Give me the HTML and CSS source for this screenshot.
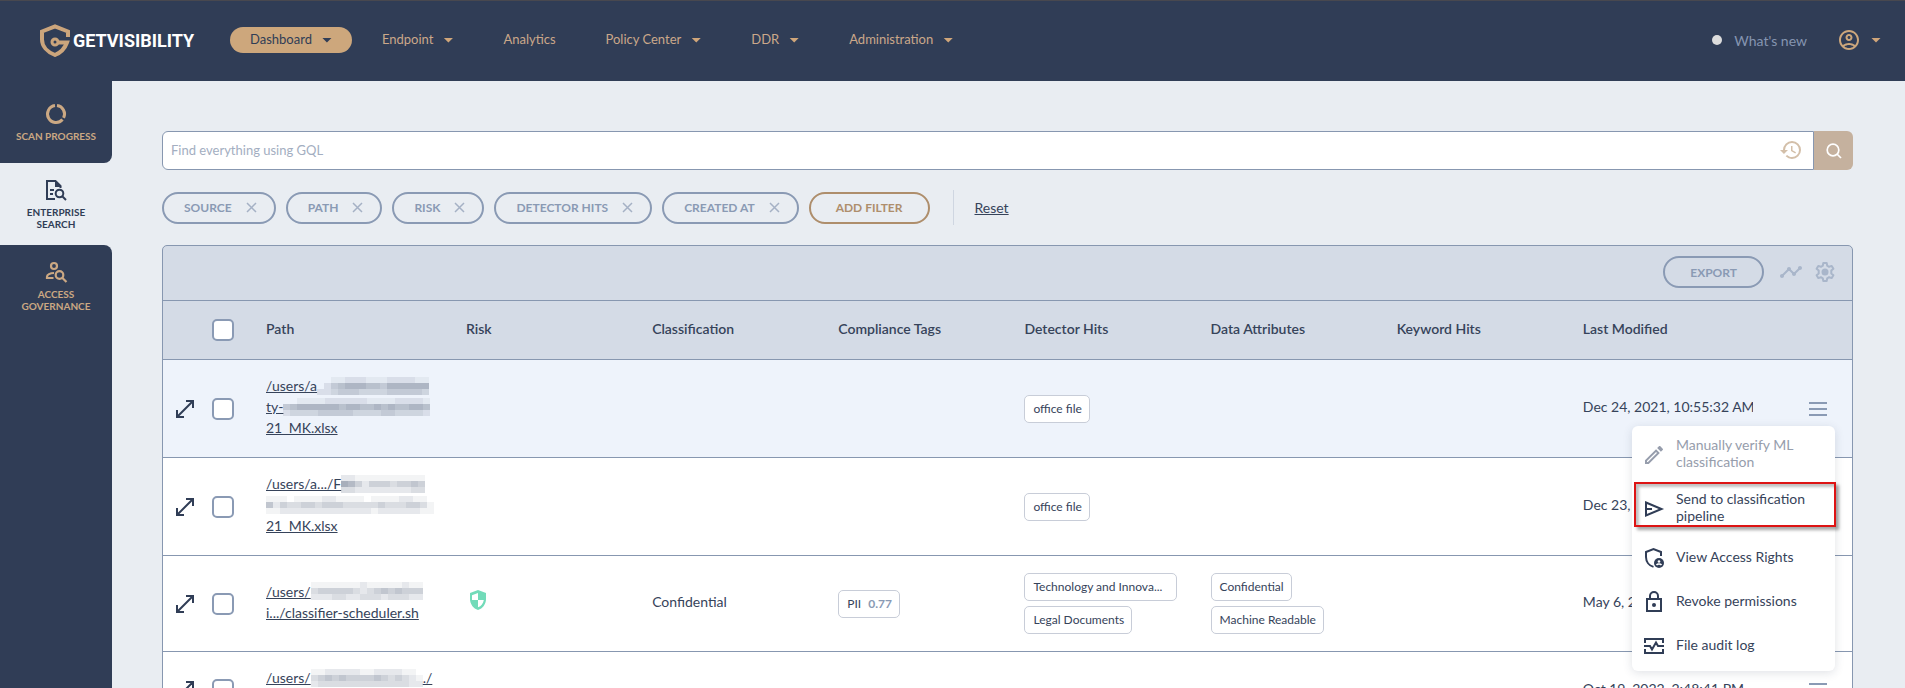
FILE: index.html
```
<!DOCTYPE html>
<html lang="en">
<head>
  <meta charset="UTF-8">
  <meta name="viewport" content="width=device-width, initial-scale=1.0">
  <title>Getvisibility - Enterprise Search</title>
  <link rel="stylesheet" href="styles.css">
</head>
<body>
  <header class="topbar">
    <a class="logo" href="#">
      <svg width="30" height="33" viewBox="0 0 30 33" fill="none" stroke="#cba57c" stroke-width="4">
        <path d="M28 13V7.500L15 2.500 2 7.500v8C2 22 7 28 15 31c6-2.500 10-7 12-12.500H17"/>
        <circle cx="15" cy="18" r="3" stroke-width="3"/>
      </svg>
      <span>GETVISIBILITY</span>
    </a>
    <nav class="nav">
      <a class="active" href="#">Dashboard <i class="caret"></i></a>
      <a href="#">Endpoint <i class="caret"></i></a>
      <a href="#">Analytics</a>
      <a href="#">Policy Center <i class="caret"></i></a>
      <a href="#">DDR <i class="caret"></i></a>
      <a href="#">Administration <i class="caret"></i></a>
    </nav>
    <div class="account">
      <a class="whats-new" href="#"><i class="dot"></i>What's new</a>
      <button class="user" aria-label="Account">
        <svg width="24" height="24" viewBox="0 0 24 24" fill="currentColor"><path d="M12 2C6.480 2 2 6.480 2 12s4.480 10 10 10 10-4.480 10-10S17.520 2 12 2zM7.350 18.500C8.660 17.560 10.260 17 12 17s3.340.560 4.650 1.500C15.340 19.440 13.740 20 12 20s-3.340-.560-4.650-1.500zm10.790-1.380C16.450 15.800 14.320 15 12 15s-4.450.800-6.140 2.120C4.700 15.730 4 13.950 4 12c0-4.420 3.580-8 8-8s8 3.580 8 8c0 1.950-.700 3.730-1.860 5.120zM12 6c-1.930 0-3.500 1.570-3.500 3.500S10.070 13 12 13s3.500-1.570 3.500-3.500S13.930 6 12 6zm0 5c-.830 0-1.500-.670-1.500-1.500S11.170 8 12 8s1.500.670 1.500 1.500S12.830 11 12 11z"/></svg>
        <i class="caret"></i>
      </button>
    </div>
  </header>

  <div class="layout">
    <aside class="sidebar">
      <a class="before-active" href="#">
        <svg width="24" height="24" viewBox="0 0 24 24" fill="none" stroke="currentColor" stroke-width="3"><path d="M13 3.550A8.500 8.500 0 0 1 19.600 15.800M18.500 17.500A8.500 8.500 0 1 1 11 3.550"/></svg>
        SCAN PROGRESS
      </a>
      <a class="active" href="#">
        <svg width="24" height="24" viewBox="0 0 24 24" fill="none" stroke="currentColor" stroke-width="2"><path d="M11 21H3V3h8.500l5 5v2"/><path d="M11 2.500 17.500 9H11z" fill="currentColor" stroke="none"/><path d="M6 12h4M6 16h3"/><circle cx="15.500" cy="15.500" r="3.800"/><path d="m18 18 4 4"/></svg>
        ENTERPRISE SEARCH
      </a>
      <a class="after-active" href="#">
        <svg width="24" height="24" viewBox="0 0 24 24" fill="none" stroke="currentColor" stroke-width="2.200"><circle cx="10" cy="6" r="3"/><path d="M10 13c-4 0-7 1.800-7 3.700V18h6.500"/><circle cx="15.500" cy="15" r="3.800"/><path d="m18 17.500 4.500 4.500"/></svg>
        ACCESS GOVERNANCE
      </a>
    </aside>

    <main class="content">
      <form class="search">
        <div class="search-box">
          <input type="text" placeholder="Find everything using GQL" aria-label="Search">
          <button type="button" class="history" aria-label="History">
            <svg width="24" height="24" viewBox="0 0 24 24" fill="currentColor"><path d="M13.500 8H12v5l4.280 2.540.720-1.210-3.500-2.080V8M13 3a9 9 0 0 0-9 9H1l3.960 4.030L9 12H6a7 7 0 0 1 7-7 7 7 0 0 1 7 7 7 7 0 0 1-7 7c-1.930 0-3.680-.790-4.940-2.060l-1.420 1.420A8.896 8.896 0 0 0 13 21a9 9 0 0 0 9-9 9 9 0 0 0-9-9"/></svg>
          </button>
        </div>
        <button type="button" class="search-btn" aria-label="Search">
          <svg width="16" height="16" viewBox="0 0 16 16" fill="none" stroke="#fff" stroke-width="1.700"><circle cx="7" cy="7" r="5.800"/><path d="m11 11 4 4"/></svg>
        </button>
      </form>

      <div class="filters">
        <button class="pill">SOURCE <svg width="11" height="11" viewBox="0 0 11 11"><path d="m1 1 9 9M10 1l-9 9"/></svg></button>
        <button class="pill">PATH <svg width="11" height="11" viewBox="0 0 11 11"><path d="m1 1 9 9M10 1l-9 9"/></svg></button>
        <button class="pill">RISK <svg width="11" height="11" viewBox="0 0 11 11"><path d="m1 1 9 9M10 1l-9 9"/></svg></button>
        <button class="pill">DETECTOR HITS <svg width="11" height="11" viewBox="0 0 11 11"><path d="m1 1 9 9M10 1l-9 9"/></svg></button>
        <button class="pill">CREATED AT <svg width="11" height="11" viewBox="0 0 11 11"><path d="m1 1 9 9M10 1l-9 9"/></svg></button>
        <button class="pill add">ADD FILTER</button>
        <span class="divider"></span>
        <a class="reset" href="#">Reset</a>
      </div>

      <section class="panel">
        <div class="toolbar">
          <button class="pill export">EXPORT</button>
          <button class="icon-btn" aria-label="Chart">
            <svg width="24" height="24" viewBox="0 0 24 24" fill="currentColor"><path d="M23 8c0 1.100-.900 2-2 2-.180 0-.350-.020-.510-.070l-3.560 3.550c.050.160.070.340.070.520 0 1.100-.900 2-2 2s-2-.900-2-2c0-.180.020-.360.070-.520l-2.550-2.550c-.160.050-.340.070-.520.070s-.360-.020-.520-.070l-4.550 4.560c.050.160.070.330.070.510 0 1.100-.900 2-2 2s-2-.900-2-2 .900-2 2-2c.180 0 .350.020.510.070l4.560-4.550C8.020 9.360 8 9.180 8 9c0-1.100.900-2 2-2s2 .900 2 2c0 .180-.020.360-.070.520l2.550 2.550c.160-.050.340-.070.520-.070s.360.020.520.070l3.550-3.560C19.020 8.350 19 8.180 19 8c0-1.100.900-2 2-2s2 .900 2 2z"/></svg>
          </button>
          <button class="icon-btn" aria-label="Settings">
            <svg width="24" height="24" viewBox="0 0 24 24"><path fill="none" stroke="currentColor" stroke-width="2" stroke-linejoin="round" d="M10.300 3h3.400l.5 2.700 1.900 1.100 2.600-.9 1.700 2.900-2.100 1.800v2.800l2.100 1.800-1.700 2.900-2.600-.9-1.900 1.100-.5 2.700h-3.400l-.5-2.700-1.900-1.100-2.600.9-1.700-2.900 2.100-1.800v-2.800L3.600 8.800l1.700-2.900 2.600.9 1.900-1.100z"/><circle cx="12" cy="12" r="3.500" fill="currentColor"/></svg>
          </button>
        </div>

        <table>
          <colgroup>
            <col class="col-expand"><col class="col-check"><col class="col-path">
            <col><col><col><col><col><col><col>
            <col class="col-actions">
          </colgroup>
          <thead>
            <tr>
              <th></th>
              <th class="check"><input type="checkbox" aria-label="Select all"></th>
              <th>Path</th>
              <th>Risk</th>
              <th>Classification</th>
              <th>Compliance Tags</th>
              <th>Detector Hits</th>
              <th>Data Attributes</th>
              <th>Keyword Hits</th>
              <th>Last Modified</th>
              <th></th>
            </tr>
          </thead>
          <tbody>
            <tr class="selected">
              <td class="expand"><button aria-label="Expand"><svg width="20" height="20" viewBox="0 0 20 20"><path d="M11 2h7v7M2 11v7h7M18 2 2 18"/></svg></button></td>
              <td class="check"><input type="checkbox" aria-label="Select row"></td>
              <td>
                <a class="path" href="#">
                  <span class="line">/users/a<span class="mosaic" data-shades="0011222111222211/0245666554666666/2234443333444443"></span></span>
                  <span class="line">ty-<span class="mosaic" data-shades="001111222222111122221/456666665665565655665/233334444433334433332"></span></span>
                  <span class="line">21_MK.xlsx</span>
                </a>
              </td>
              <td></td>
              <td></td>
              <td></td>
              <td class="tags"><span class="chip">office file</span></td>
              <td></td>
              <td></td>
              <td class="date">Dec 24, 2021, 10:55:32 AM</td>
              <td class="actions">
                <button class="burger" aria-label="Row actions"><i></i><i></i><i></i></button>
                <div class="menu">
                  <button class="tall" disabled>
                    <svg width="24" height="24" viewBox="0 0 24 24" fill="currentColor"><path d="m14.060 9.020.920.920L5.920 19H5v-.920l9.060-9.060M17.660 3c-.250 0-.510.100-.700.290l-1.830 1.830 3.750 3.750 1.830-1.830a.996.996 0 0 0 0-1.410l-2.340-2.340c-.200-.200-.450-.290-.710-.290zm-3.600 3.190L3 17.250V21h3.750L17.810 9.940l-3.750-3.750z"/></svg>
                    Manually verify ML classification
                  </button>
                  <button class="tall">
                    <svg width="24" height="24" viewBox="0 0 24 24" fill="none" stroke="currentColor" stroke-width="2"><path d="M4 5.500 19.500 12 4 18.500zM4 12h6"/></svg>
                    Send to classification pipeline
                  </button>
                  <button>
                    <svg width="24" height="24" viewBox="0 0 24 24" fill="none" stroke="currentColor" stroke-width="2"><path d="M19 10V6l-7.500-3L4 6v5c0 4.500 3 8.600 7.500 9.900"/><circle cx="17" cy="17" r="5" fill="currentColor" stroke="none"/><circle cx="17" cy="15.500" r="1.300" fill="#fff" stroke="none"/><path d="M14.500 19c1-1.300 4-1.300 5 0" stroke="#fff" stroke-width="1.500"/></svg>
                    View Access Rights
                  </button>
                  <button>
                    <svg width="24" height="24" viewBox="0 0 24 24" fill="none" stroke="currentColor" stroke-width="2"><path d="M5 9h14v12H5zM8 9V6a4 4 0 0 1 8 0v3"/><circle cx="12" cy="15" r="2" fill="currentColor" stroke="none"/></svg>
                    Revoke permissions
                  </button>
                  <button>
                    <svg width="24" height="24" viewBox="0 0 24 24" fill="none" stroke="currentColor" stroke-width="2"><path d="M3 9V5h18v4M3 15v4h18v-4M2 12h6l2 3.500L14 8.500l2 3.500h6"/></svg>
                    File audit log
                  </button>
                  <div class="highlight"></div>
                </div>
              </td>
            </tr>
            <tr>
              <td class="expand"><button aria-label="Expand"><svg width="20" height="20" viewBox="0 0 20 20"><path d="M11 2h7v7M2 11v7h7M18 2 2 18"/></svg></button></td>
              <td class="check"><input type="checkbox" aria-label="Select row"></td>
              <td>
                <a class="path" href="#">
                  <span class="line">/users/a.../F<span class="mosaic" data-shades="221111111111/764244434454/332222222233"></span></span>
                  <span class="line"><span class="mosaic" data-shades="111011112211110111122110/524334434443333343334431/112222222222222122222211"></span></span>
                  <span class="line">21_MK.xlsx</span>
                </a>
              </td>
              <td></td>
              <td></td>
              <td></td>
              <td class="tags"><span class="chip">office file</span></td>
              <td></td>
              <td></td>
              <td class="date">Dec 23, 2021</td>
              <td class="actions"><button class="burger" aria-label="Row actions"><i></i><i></i><i></i></button></td>
            </tr>
            <tr class="short">
              <td class="expand"><button aria-label="Expand"><svg width="20" height="20" viewBox="0 0 20 20"><path d="M11 2h7v7M2 11v7h7M18 2 2 18"/></svg></button></td>
              <td class="check"><input type="checkbox" aria-label="Select row"></td>
              <td>
                <a class="path" href="#">
                  <span class="line">/users/<span class="mosaic" data-shades="1111111211111211/3444443234545444/2223322333233322"></span></span>
                  <span class="line">i.../classifier-scheduler.sh</span>
                </a>
              </td>
              <td class="risk">
                <svg class="shield" width="24" height="24" viewBox="0 0 24 24"><path fill="#72dbb9" d="M12 2 4 5v6c0 5 3.400 9.700 8 11 4.600-1.300 8-6 8-11V5z"/><path fill="#fff" d="M12 5v7h5.800c-.400 3.200-2.600 6.200-5.800 7.300V12H6V7.200z"/></svg>
              </td>
              <td>Confidential</td>
              <td class="tags"><span class="chip">PII <b>0.77</b></span></td>
              <td class="tags"><div class="chips"><span class="chip wide">Technology and Innova...</span><span class="chip">Legal Documents</span></div></td>
              <td class="tags"><div class="chips"><span class="chip">Confidential</span><span class="chip">Machine Readable</span></div></td>
              <td></td>
              <td class="date">May 6, 2022</td>
              <td class="actions"><button class="burger" aria-label="Row actions"><i></i><i></i><i></i></button></td>
            </tr>
            <tr class="compact">
              <td class="expand"><button aria-label="Expand"><svg width="20" height="20" viewBox="0 0 20 20"><path d="M11 2h7v7M2 11v7h7M18 2 2 18"/></svg></button></td>
              <td class="check"><input type="checkbox" aria-label="Select row"></td>
              <td>
                <a class="path" href="#">
                  <span class="line">/users/<span class="mosaic" data-shades="1122222112222110/3454544445434321/2333333333333322"></span>./</span>
                  <span class="line">scheduler.sh</span>
                </a>
              </td>
              <td></td>
              <td></td>
              <td></td>
              <td></td>
              <td></td>
              <td></td>
              <td class="date">Oct 19, 2022, 2:48:41 PM</td>
              <td class="actions"><button class="burger" aria-label="Row actions"><i></i><i></i><i></i></button></td>
            </tr>
          </tbody>
        </table>
      </section>
    </main>
  </div>

  <script src="script.js"></script>
</body>
</html>
```

FILE: styles.css
```
* {
  box-sizing: border-box;
}

body {
  margin: 0;
  height: 100vh;
  overflow: hidden;
  display: flex;
  flex-direction: column;
  background-color: #e9edf2;
  color: #36435a;
  font-family: Lato, "Liberation Sans", sans-serif;
  font-size: 14px;
}

a {
  color: inherit;
  text-decoration: none;
}

button {
  padding: 0;
  border: none;
  background: none;
  color: inherit;
  font: inherit;
  cursor: pointer;
}

svg {
  flex-shrink: 0;
}

/* top bar */

.topbar {
  flex-shrink: 0;
  display: flex;
  align-items: center;
  height: 81px;
  padding: 0 24px 2px 40px;
  border-top: 1px solid #48484f;
  background-color: #303d56;
}

.logo {
  display: flex;
  align-items: center;
  gap: 3px;
  width: 190px;
  color: #fff;
  font-family: Roboto, "Liberation Sans", sans-serif;
  font-size: 18px;
  font-weight: bold;
}

.nav {
  display: flex;
  gap: 10px;
  color: #cba88a;
  font-size: 13px;
}

.nav a {
  display: flex;
  align-items: center;
  gap: 10px;
  height: 26px;
  padding: 0 20px 2px;
  border-radius: 13px;
}

.nav .active {
  background-color: #cda77c;
  color: #303d56;
}

.caret {
  width: 10px;
  height: 5px;
  background-color: #d0a67a;
  clip-path: polygon(0 0, 100% 0, 50% 100%);
}

.nav .caret {
  margin-top: 2px;
}

.active .caret {
  background-color: #303d56;
}

.account {
  display: flex;
  align-items: center;
  gap: 30px;
  margin-left: auto;
}

.whats-new {
  display: flex;
  align-items: center;
  gap: 12px;
  color: #8595b1;
}

.dot {
  width: 10px;
  height: 10px;
  border-radius: 50%;
  background-color: #dcdcdc;
}

.user {
  display: flex;
  align-items: center;
  gap: 10px;
  color: #cda77c;
}

/* sidebar */

.layout {
  flex: 1;
  display: flex;
  min-height: 0;
}

.sidebar {
  display: flex;
  flex-direction: column;
  width: 112px;
  flex-shrink: 0;
}

.sidebar a {
  display: flex;
  flex-direction: column;
  align-items: center;
  gap: 4px;
  height: 82px;
  padding: 15px 16px 0;
  background-color: #303d56;
  color: #cba883;
  font-size: 10px;
  font-weight: bold;
  line-height: 12px;
  text-align: center;
}

.sidebar .before-active {
  padding: 21px 0 0;
  border-bottom-right-radius: 8px;
}

.sidebar .active {
  background-color: transparent;
  color: #303d56;
}

.sidebar .after-active {
  flex: 1;
  border-top-right-radius: 8px;
}

/* search and filters */

.content {
  flex: 1;
  min-width: 0;
  padding: 50px 52px 0 50px;
}

.search {
  display: flex;
  height: 39px;
}

.search-box {
  flex: 1;
  display: flex;
  align-items: center;
  padding-right: 10px;
  border: 1px solid #8797b0;
  border-radius: 6px 0 0 6px;
  background-color: #fff;
}

.search-box input {
  flex: 1;
  height: 100%;
  padding: 0 8px 2px;
  border: none;
  outline: none;
  background: none;
  font: inherit;
  font-size: 13px;
}

.search-box input::placeholder {
  color: #a3aec1;
}

.history {
  height: 24px;
  margin-bottom: 2px;
  color: #d3bfa9;
}

.search-btn {
  display: flex;
  align-items: center;
  justify-content: center;
  width: 39px;
  border-radius: 0 6px 6px 0;
  background-color: #c5b19e;
}

.filters {
  display: flex;
  align-items: center;
  gap: 10px;
  margin: 20px 0;
}

.pill {
  display: flex;
  align-items: center;
  justify-content: center;
  gap: 14px;
  height: 32px;
  padding: 0 17px 0 20px;
  border: 2px solid #8a9ab4;
  border-radius: 16px;
  color: #8a9ab4;
  font-size: 12px;
  font-weight: bold;
}

.pill svg {
  fill: none;
  stroke: #a5b1c5;
  stroke-width: 1.5;
}

.add {
  padding: 0 25px;
  border-color: #ae8e6c;
  color: #ae8e6c;
}

.divider {
  width: 1px;
  height: 35px;
  margin: 0 11px 0 13px;
  background-color: #cfd6e1;
}

.reset {
  text-decoration: underline;
}

/* results table */

.panel {
  border: 1px solid #8797b0;
  border-radius: 5px 5px 0 0;
  background-color: #d4dbe6;
}

.toolbar {
  display: flex;
  align-items: center;
  justify-content: flex-end;
  gap: 10px;
  height: 54px;
  padding: 0 15px 2px 0;
}

.export {
  padding: 0 25px;
  margin-right: 5px;
}

.icon-btn {
  height: 24px;
  color: #a9b6ca;
}

table {
  width: 100%;
  table-layout: fixed;
  border-collapse: separate;
  border-spacing: 0;
}

.col-expand {
  width: 44px;
}

.col-check {
  width: 43px;
}

.col-path {
  width: 200px;
}

.col-actions {
  width: 99px;
}

th,
td {
  height: 98px;
  padding: 0 0 4px 16px;
  border-top: 1px solid #8797b0;
  text-align: left;
}

th {
  height: 59px;
  font-weight: 600;
}

td {
  background-color: #fff;
}

.selected td {
  background-color: #eef3fb;
}

.short td {
  height: 96px;
}

.compact td {
  height: 77px;
}

th.check,
td.check {
  padding: 0 0 0 5px;
}

input[type="checkbox"] {
  display: block;
  appearance: none;
  width: 22px;
  height: 22px;
  margin: 0;
  border: 2px solid #8a9ab4;
  border-radius: 5px;
  background-color: #fff;
}

td.expand {
  padding: 0 0 0 12px;
}

td.tags {
  padding-bottom: 0;
}

td.risk {
  padding-bottom: 8px;
}

.expand button,
.expand svg {
  display: block;
}

.expand path {
  fill: none;
  stroke: #303d56;
  stroke-width: 2;
}

.path {
  display: block;
  text-decoration: underline;
}

.line {
  display: flex;
  align-items: center;
  height: 21px;
}

.mosaic {
  display: grid;
  grid-auto-rows: 6px;
  justify-content: start;
}

.mosaic i {
  background-color: #8f98a8;
}

.shield {
  display: block;
}

.date {
  overflow: hidden;
  white-space: nowrap;
}

.chips {
  display: flex;
  flex-direction: column;
  align-items: flex-start;
  gap: 5px;
}

.chip {
  display: inline-flex;
  gap: 7px;
  height: 28px;
  padding: 0 7px 0 8px;
  border: 1px solid #c8cdd8;
  border-radius: 5px;
  background-color: #fff;
  font-size: 12px;
  line-height: 25px;
  vertical-align: middle;
}

.chip b {
  color: #8a9ab4;
}

.wide {
  width: 153px;
}

/* row actions */

td.actions {
  position: relative;
  padding: 0 0 0 56px;
}

.burger {
  display: flex;
  flex-direction: column;
  gap: 4px;
}

.burger i {
  width: 18px;
  height: 2px;
  background-color: #8a9ab4;
}

.menu {
  position: absolute;
  z-index: 1;
  top: 66px;
  right: 17px;
  width: 203px;
  padding: 2px 0 3px;
  border-radius: 6px;
  background-color: #fff;
  box-shadow: 0 2px 10px rgba(48, 61, 86, 0.15);
}

.menu button {
  display: flex;
  align-items: center;
  gap: 10px;
  width: 100%;
  height: 44px;
  padding: 0 20px 4px 10px;
  line-height: 17px;
  text-align: left;
}

.menu .tall {
  height: 54px;
}

.menu svg {
  margin-top: 4px;
  color: #303d56;
}

.menu button:disabled,
.menu button:disabled svg {
  color: #969dac;
}

.highlight {
  position: absolute;
  top: 56px;
  left: 2px;
  width: 202px;
  height: 45px;
  border: 2px solid #dd1414;
  box-shadow: 3px 3px 3px rgba(0, 0, 0, 0.35), inset 3px 3px 3px rgba(0, 0, 0, 0.25);
  pointer-events: none;
}
```

FILE: script.js
```
// fills the masked part of a path with grey blocks, one digit per block
document.querySelectorAll('.mosaic').forEach(mosaic => {
  const rows = mosaic.dataset.shades.split('/');
  mosaic.style.gridTemplateColumns = `repeat(${rows[0].length}, 7px)`;
  rows.join('').split('').forEach(shade => {
    const block = document.createElement('i');
    block.style.opacity = shade / 9;
    mosaic.appendChild(block);
  });
});
```
